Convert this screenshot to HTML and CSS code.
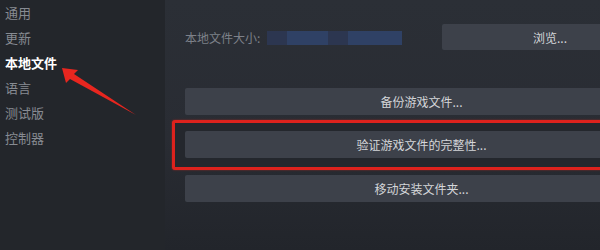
FILE: index.html
```html
<!DOCTYPE html>
<html lang="zh-CN">
<head>
<meta charset="utf-8">
<link rel="stylesheet" href="styles.css">
</head>
<body>
<div class="app">
  <nav class="sidebar">
    <div class="nav-item">通用</div>
    <div class="nav-item">更新</div>
    <div class="nav-item active">本地文件</div>
    <div class="nav-item">语言</div>
    <div class="nav-item">测试版</div>
    <div class="nav-item">控制器</div>
  </nav>
  <main class="main">
    <div class="size-row">
      <span class="label">本地文件大小:</span>
      <span class="blur">
        <span class="seg dim w20"></span><span class="seg w41"></span><span class="seg dim w20"></span><span class="seg w54"></span>
      </span>
      <button class="btn browse">浏览...</button>
    </div>
    <button class="btn wide backup">备份游戏文件...</button>
    <div class="highlight">
      <button class="btn wide">验证游戏文件的完整性...</button>
    </div>
    <button class="btn wide move">移动安装文件夹...</button>
  </main>
  <svg class="arrow" width="80" height="60" viewBox="0 0 80 60">
    <polygon points="2,8 18,10 14,14 76,55 10,19 6,23" fill="#e8261f"/>
  </svg>
</div>
</body>
</html>
```
FILE: styles.css
```css
html, body {
  margin: 0;
  padding: 0;
  width: 600px;
  height: 250px;
  overflow: hidden;
  background: #24272c;
  font-family: "Noto Sans CJK SC", "Noto Sans", sans-serif;
}
.app {
  position: relative;
  display: flex;
  width: 600px;
  height: 250px;
  overflow: hidden;
}
.sidebar {
  width: 165px;
  flex: none;
  background: #23262b;
  padding-top: 0;
}
.nav-item {
  height: 25px;
  line-height: 25px;
  padding-left: 5px;
  font-size: 13px;
  color: #878b92;
}
.nav-item.active {
  color: #ffffff;
  font-weight: bold;
}
.main {
  flex: none;
  width: 495px;
  padding: 24px 0 0 20px;
  box-sizing: border-box;
  background: linear-gradient(180deg, #2b2f36 0%, #292c33 55%, #22252b 100%);
  overflow: visible;
}
.size-row {
  display: flex;
  align-items: center;
  width: 473px;
  height: 26px;
}
.label {
  font-size: 12px;
  color: #7d8189;
  width: 82px;
}
.blur {
  display: flex;
  height: 14px;
  margin-top: 1px;
}
.seg {
  height: 14px;
  background: #2f4165;
}
.seg.dim { background: #2c3650; }
.w20 { width: 20px; }
.w41 { width: 41px; }
.w54 { width: 54px; }
.btn {
  display: block;
  border: none;
  border-radius: 2px;
  background: #3d414a;
  color: #d4d6d9;
  font-family: "Noto Sans CJK SC", "Noto Sans", sans-serif;
  font-size: 12px;
  padding: 0;
  cursor: pointer;
}
.browse {
  margin-left: auto;
  width: 216px;
  height: 26px;
  flex: none;
}
.wide {
  width: 473px;
  height: 27px;
}
.backup {
  margin-top: 38px;
}
.highlight {
  margin: 5px 0 0 -13px;
  width: 520px;
  padding: 8px 0 9px 10px;
  border: 3px solid #dd221d;
  border-radius: 3px;
  box-shadow: 0 0 2px rgba(230, 40, 30, 0.6);
  background: #24272d;
}
.move {
  margin-top: 5px;
}
.arrow {
  position: absolute;
  left: 60px;
  top: 60px;
}
```
